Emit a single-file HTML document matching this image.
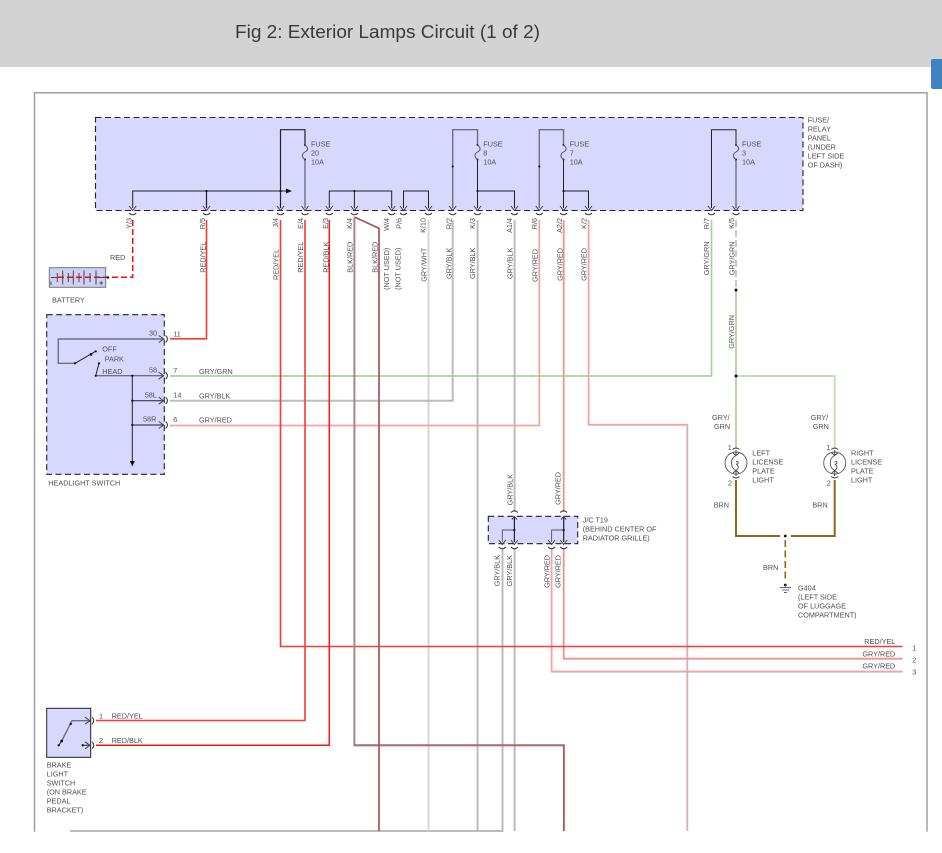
<!DOCTYPE html>
<html>
<head>
<meta charset="utf-8">
<title>Fig 2: Exterior Lamps Circuit (1 of 2)</title>
<style>
html,body{margin:0;padding:0;background:#fff;width:942px;height:853px;overflow:hidden}
svg{position:absolute;left:0;top:0;display:block}
text{font-family:"Liberation Sans",sans-serif;font-size:7.25px;fill:#4e4e58}
text.v{text-anchor:end}
.soft{filter:blur(.25px)}
.w{fill:none;stroke-linejoin:miter}
.ry{stroke:#fb3a2c;stroke-width:1.6}
.re{stroke:#f01818;stroke-width:1.5}
.br{stroke:#a85458;stroke-width:1.8}
.gw{stroke:#d6d6d6;stroke-width:2}
.gb{stroke:#bcbcbc;stroke-width:2}
.gr{stroke:#f4a2a2;stroke-width:1.8}
.gg{stroke:#a6d493;stroke-width:1.7}
.gl{stroke:#c6e0bc;stroke-width:2}
.bn{stroke:#8a6818;stroke-width:2}
.k{fill:none;stroke:#222;stroke-width:1}
.g{fill:none;stroke:#6e6e80;stroke-width:1.4}
.a{fill:none;stroke:#444;stroke-width:1}
.t{fill:none;stroke:#333;stroke-width:1}
</style>
</head>
<body>
<svg width="942" height="853" viewBox="0 0 942 853" xmlns="http://www.w3.org/2000/svg">
<defs>
<g id="dn"><path class="a" d="M-3.5,-4 L0,0.5 L3.5,-4"/><path class="t" d="M-3.5,3 Q0,6.5 3.5,3"/></g>
<g id="up"><path class="t" d="M-3.5,-4 Q0,-7.5 3.5,-4"/><path class="a" d="M-2.5,3 L0,0 L2.5,3"/></g>
<g id="rt"><path class="a" d="M-5,-3.5 L0,0 L-5,3.5"/><path class="t" d="M2,-3.5 Q5.5,0 2,3.5"/></g>
<g id="fs"><circle cx="0" cy="0" r="1" fill="#222"/><circle cx="0" cy="14.5" r="1" fill="#222"/><path fill="none" stroke="#555" stroke-width="1" d="M0,0 C3.5,3 3.5,5 0,7 C-3.5,9 -3.5,12 0,14.5"/></g>
<g id="lamp"><circle cx="0" cy="0" r="11" fill="none" stroke="#555" stroke-width=".9"/><path fill="none" stroke="#444" stroke-width=".9" d="M0,-13 V-8 M-3.5,-13.5 Q0,-16.5 3.5,-13.5 M-3,-10 L0,-7.5 L3,-10 M0,13 V8 M-3.5,13.5 Q0,16.5 3.5,13.5 M-3,10 L0,7.5 L3,10 M0,-7.5 C-6,-5 -6,5 0,7.5 M0,-1 C3,-3 3,2 0,1 M0,7.5 C3,5 3,3 0,1"/></g>
</defs>

<rect x="0" y="0" width="942" height="67" fill="#d3d3d3"/>
<path d="M942,59 H933 Q931,59 931,61 V87 Q931,89 933,89 H942 Z" fill="#3f83c3"/>
<text x="235" y="38" textLength="305" lengthAdjust="spacingAndGlyphs" style="font-size:18.5px;fill:#3a3a3a">Fig 2: Exterior Lamps Circuit (1 of 2)</text>

<g class="soft">
<path d="M34.5,831.7 V92.7 H927 V831.7" fill="none" stroke="#a0a0a0" stroke-width="1.5"/>

<rect x="95.5" y="117.5" width="707.5" height="93" fill="#d8d8ff" stroke="#222" stroke-width="1.1" stroke-dasharray="6 3.5"/>
<rect x="46.7" y="314.7" width="117.6" height="159.6" fill="#d8d8ff" stroke="#222" stroke-width="1.1" stroke-dasharray="6 3.5"/>
<rect x="49.3" y="267.7" width="56.4" height="19.6" fill="#d0d0f4" stroke="#777" stroke-width="1"/>
<rect x="46.7" y="708.3" width="44" height="49" fill="#d8d8ff" stroke="#222" stroke-width="1"/>
<rect x="488.3" y="516.3" width="89.4" height="27.4" fill="#d8d8ff" stroke="#222" stroke-width="1.1" stroke-dasharray="6 3.5"/>

<!-- field wires -->
<path class="w gb" d="M70,831 H502.5 V548"/>
<path class="w gw" d="M428.5,220 V831"/>
<path class="w gb" d="M452.7,220 V400.7 H170"/>
<path class="w gb" d="M477.6,220 V831"/>
<path class="w gb" d="M514.6,220 V512 M514.6,548 V831"/>
<path class="w gr" d="M539.3,220 V425.5 H170"/>
<path class="w gr" d="M588.6,220 V424.8 H687.3 V831"/>
<path class="w gb" style="stroke-width:.6" d="M687.3,425 V831"/>
<path class="w gr" d="M551.6,548 V671.5 H902.5"/>
<path class="w gb" style="stroke-width:.6" d="M551.6,672.3 H902.5"/>
<path class="w gr" style="stroke:#f58e8e" d="M563.7,220 V512 M563.7,548 V658.7 H902.5"/>
<path class="w gg" d="M711.5,220 V376 H170"/>
<path class="w gl" d="M736,376 H834.7 V449"/>
<path class="w gg" d="M736,290 V449"/>
<path d="M736,220 V288" fill="none" stroke="#bbb" stroke-width="1.6" stroke-dasharray="7 3"/>
<path class="w ry" d="M206.5,220 V338.8 H170"/>
<path class="w ry" d="M280.5,220 V646.5 H902.5"/>
<path class="w ry" d="M305,220 V720.5 H96"/>
<path class="w re" d="M329.3,220 V745.3 H96"/>
<path class="w" stroke="#a08a8a" stroke-width="2" d="M354.4,218 V745.3 H563.9 V831"/>
<path class="w" stroke="#e86a6a" stroke-width="1" d="M355,745.8 H564.5 V831"/>
<path class="w" stroke="#666" stroke-width=".8" d="M354.2,745 H563.4 V831"/>
<path class="w br" style="stroke-width:1.7" d="M354.4,217 L379,228.3 V831"/>
<path fill="none" stroke="#f01010" stroke-width="1.5" stroke-dasharray="6 3" d="M132.7,220 V277.3 H56"/>
<path class="w bn" d="M736,480 V536 H780 M791,536 H834.7 V480"/>
<path fill="none" stroke="#8a6818" stroke-width="1.6" stroke-dasharray="7 3.5" d="M785.3,540 V580"/>

<!-- panel internals -->
<path class="k" d="M132.7,208 V191 H287"/>
<path fill="#111" d="M286,188.5 L292,191 L286,193.5 Z"/>
<path class="k" style="stroke-width:1.2" d="M206.5,191 V208 M280.5,208 V129.7 H305 V145"/>
<path class="g" d="M305,159.5 V208"/>
<path class="k" d="M329.3,208 V191 H391.7 V208 M354.4,191 V208 M403.5,208 V191 H428.5 V208"/>
<path class="g" d="M452.7,208 V129.7 H477.5 V145"/>
<path class="k" d="M477.5,159.5 V208 M477.5,191 H514.5 V208"/>
<path class="g" d="M539.3,208 V129.7 H563.5 V145"/>
<path class="k" d="M563.5,159.5 V208 M563.5,191 H588.5 V208"/>
<path class="k" d="M711.5,208 V129.7 H736 V145"/>
<path class="g" d="M736,159.5 V208"/>
<use href="#fs" x="305" y="145"/><use href="#fs" x="477.5" y="145"/><use href="#fs" x="563.5" y="145"/><use href="#fs" x="736" y="145"/>
<g fill="#111">
<circle cx="206.5" cy="191" r="1.1"/><circle cx="280.5" cy="191" r="1.1"/><circle cx="354.4" cy="191" r="1.1"/>
<circle cx="452.7" cy="166.5" r="1.1"/><circle cx="477.5" cy="191" r="1.1"/><circle cx="539.3" cy="166.5" r="1.1"/><circle cx="563.5" cy="191" r="1.1"/>
<circle cx="736" cy="290" r="1.5"/><circle cx="736" cy="376" r="1.5"/><circle cx="785.3" cy="536" r="1.4"/><circle cx="785.3" cy="585" r="1.4"/>
</g>
<use href="#dn" x="132.7" y="210"/><use href="#dn" x="206.5" y="210"/><use href="#dn" x="280.5" y="210"/><use href="#dn" x="305" y="210"/><use href="#dn" x="329.3" y="210"/><use href="#dn" x="354.4" y="210"/><use href="#dn" x="391.7" y="210"/><use href="#dn" x="403.5" y="210"/><use href="#dn" x="428.5" y="210"/><use href="#dn" x="452.7" y="210"/><use href="#dn" x="477.5" y="210"/><use href="#dn" x="514.5" y="210"/><use href="#dn" x="539.3" y="210"/><use href="#dn" x="563.5" y="210"/><use href="#dn" x="588.5" y="210"/><use href="#dn" x="711.5" y="210"/><use href="#dn" x="736" y="210"/>

<!-- battery -->
<path fill="none" stroke="#444" stroke-width="1" d="M51,277.5 H57.3 M57.3,273 V282 M62.7,270.5 V284.5 M68.3,273 V282 M73.3,270.5 V284.5 M79,273 V282 M84,270.5 V284.5 M90,273 V282 M96,270.5 V284.5 M96,277.5 H108 M51,281.5 V285 M99.5,283 H103 M101.2,281.3 V284.7"/>
<circle cx="108" cy="277.5" r="1.2" fill="#111"/>

<!-- headlight switch -->
<path class="g" d="M163,339 H58.3 V363.3 H75"/>
<path class="k" d="M75,363.3 L95.7,351.3 M99,363.3 L95.7,375.7"/>
<path class="g" d="M95.7,375.7 H163"/>
<path class="k" d="M132.3,375.7 V462 M132.3,400.7 H163 M132.3,425 H163"/>
<path fill="#111" d="M129.8,461 H134.8 L132.3,466.5 Z"/>
<g fill="#111"><circle cx="75" cy="363.3" r="1.2"/><circle cx="91" cy="354.3" r="1.4"/><circle cx="95.7" cy="351.3" r="1.1"/><circle cx="99" cy="363.3" r="1.1"/><circle cx="95.7" cy="375.7" r="1.1"/><circle cx="132.3" cy="375.7" r="1.1"/><circle cx="132.3" cy="400.7" r="1.1"/><circle cx="132.3" cy="425" r="1.1"/></g>
<use href="#rt" x="163.7" y="339"/><use href="#rt" x="163.7" y="375.7"/><use href="#rt" x="163.7" y="400.7"/><use href="#rt" x="163.7" y="425"/>

<!-- J/C -->
<path class="k" style="stroke-width:1.2" d="M514.4,517 V542 M563.7,517 V542"/>
<path fill="none" stroke="#555" stroke-width=".9" d="M502.3,542 V530 H514.4 M551.6,542 V530 H563.7"/>
<g fill="#111"><circle cx="514.4" cy="530" r="1.1"/><circle cx="563.7" cy="530" r="1.1"/></g>
<use href="#up" x="514.4" y="516.5"/><use href="#up" x="563.7" y="516.5"/>
<use href="#dn" x="502.3" y="544"/><use href="#dn" x="514.4" y="544"/><use href="#dn" x="551.6" y="544"/><use href="#dn" x="563.7" y="544"/>

<!-- lamps / ground -->
<use href="#lamp" x="736" y="463"/><use href="#lamp" x="834.7" y="463"/>
<path fill="none" stroke="#666" stroke-width=".9" d="M780,587.5 H791 M782,590 H789 M784,592.5 H787 M785.3,585 V587.5"/>

<!-- brake -->
<path class="g" d="M90,720.7 H72 L61.7,741"/>
<path class="k" d="M61.7,741 L58.7,745.3 M82.7,745.3 H90"/>
<g fill="#111"><circle cx="70.7" cy="724" r="1.2"/><circle cx="61.7" cy="741" r="1.4"/><circle cx="58.7" cy="745.3" r="1.2"/><circle cx="82.7" cy="745.3" r="1.2"/></g>
<use href="#rt" x="90" y="720.7"/><use href="#rt" x="90" y="745.3"/>

<!-- fuse labels -->
<text x="311" y="146.7">FUSE</text><text x="311" y="155.7">20</text><text x="311" y="164.7">10A</text>
<text x="483.3" y="146.7">FUSE</text><text x="483.3" y="155.7">8</text><text x="483.3" y="164.7">10A</text>
<text x="569.7" y="146.7">FUSE</text><text x="569.7" y="155.7">7</text><text x="569.7" y="164.7">10A</text>
<text x="742" y="146.7">FUSE</text><text x="742" y="155.7">3</text><text x="742" y="164.7">10A</text>
<text x="807.7" y="122.7">FUSE/</text><text x="807.7" y="131.7">RELAY</text><text x="807.7" y="140.7">PANEL</text><text x="807.7" y="149.7">(UNDER</text><text x="807.7" y="158.7">LEFT SIDE</text><text x="807.7" y="167.7">OF DASH)</text>

<!-- rotated connector labels -->
<text class="v" transform="translate(131.5,218) rotate(-90)">Y/3</text>
<text class="v" transform="translate(205,218) rotate(-90)">R/5</text>
<text class="v" transform="translate(278,218) rotate(-90)">J/4</text>
<text class="v" transform="translate(303,218) rotate(-90)">E/4</text>
<text class="v" transform="translate(328,218) rotate(-90)">E/3</text>
<text class="v" transform="translate(352,218) rotate(-90)">K/4</text>
<text class="v" transform="translate(389,218) rotate(-90)">W/4</text>
<text class="v" transform="translate(401.7,218) rotate(-90)">P/6</text>
<text class="v" transform="translate(425.7,218) rotate(-90)">K/10</text>
<text class="v" transform="translate(451.7,218) rotate(-90)">R/2</text>
<text class="v" transform="translate(475,218) rotate(-90)">K/3</text>
<text class="v" transform="translate(512,218) rotate(-90)">A1/4</text>
<text class="v" transform="translate(537,218) rotate(-90)">R/6</text>
<text class="v" transform="translate(562,218) rotate(-90)">A2/2</text>
<text class="v" transform="translate(586.7,218) rotate(-90)">K/2</text>
<text class="v" transform="translate(709,218) rotate(-90)">R/7</text>
<text class="v" transform="translate(734,218) rotate(-90)">K/5</text>

<!-- rotated wire labels -->
<text class="v" transform="translate(205.7,241.7) rotate(-90)">RED/YEL</text>
<text class="v" transform="translate(278.7,249) rotate(-90)">RED/YEL</text>
<text class="v" transform="translate(303,241.7) rotate(-90)">RED/YEL</text>
<text class="v" transform="translate(328.7,241.7) rotate(-90)">RED/BLK</text>
<text class="v" transform="translate(352.7,241.7) rotate(-90)">BLK/RED</text>
<text class="v" transform="translate(377.3,241.7) rotate(-90)">BLK/RED</text>
<text class="v" transform="translate(389,247.7) rotate(-90)">(NOT USED)</text>
<text class="v" transform="translate(400.7,247.7) rotate(-90)">(NOT USED)</text>
<text class="v" transform="translate(426.7,247.7) rotate(-90)">GRY/WHT</text>
<text class="v" transform="translate(451.7,247.7) rotate(-90)">GRY/BLK</text>
<text class="v" transform="translate(475,247.7) rotate(-90)">GRY/BLK</text>
<text class="v" transform="translate(512.3,247.7) rotate(-90)">GRY/BLK</text>
<text class="v" transform="translate(537.3,249) rotate(-90)">GRY/RED</text>
<text class="v" transform="translate(562.3,248) rotate(-90)">GRY/RED</text>
<text class="v" transform="translate(586.3,248) rotate(-90)">GRY/RED</text>
<text class="v" transform="translate(709,241.5) rotate(-90)">GRY/GRN</text>
<text class="v" transform="translate(734.7,241.5) rotate(-90)">GRY/GRN</text>
<text class="v" transform="translate(734,315) rotate(-90)">GRY/GRN</text>
<text class="v" transform="translate(512.3,474) rotate(-90)">GRY/BLK</text>
<text class="v" transform="translate(560.7,472) rotate(-90)">GRY/RED</text>
<text class="v" transform="translate(499.3,555) rotate(-90)">GRY/BLK</text>
<text class="v" transform="translate(512,555) rotate(-90)">GRY/BLK</text>
<text class="v" transform="translate(549.3,555) rotate(-90)">GRY/RED</text>
<text class="v" transform="translate(560.7,555) rotate(-90)">GRY/RED</text>

<!-- left labels -->
<text x="110" y="260">RED</text>
<text x="52" y="302.7">BATTERY</text>
<text x="48.3" y="485.7">HEADLIGHT SWITCH</text>
<text x="149" y="335.7">30</text><text x="173.3" y="336.7">11</text>
<text x="102.3" y="351.7">OFF</text><text x="104.7" y="361.7">PARK</text><text x="102.3" y="374">HEAD</text>
<text x="149" y="372.3">58</text><text x="173.3" y="373">7</text><text x="199" y="374">GRY/GRN</text>
<text x="144.7" y="397.7">58L</text><text x="173.3" y="397.7">14</text><text x="199" y="398.5">GRY/BLK</text>
<text x="143" y="421.7">58R</text><text x="173.3" y="422">6</text><text x="199" y="422.7">GRY/RED</text>

<!-- lamp labels -->
<text x="712" y="420">GRY/</text><text x="714" y="429">GRN</text>
<text x="810.7" y="420">GRY/</text><text x="812.7" y="429">GRN</text>
<text x="727.7" y="450">1</text><text x="728" y="485.3">2</text>
<text x="826.4" y="450">1</text><text x="826.7" y="485.3">2</text>
<text x="713.7" y="507.7">BRN</text><text x="812.4" y="507.7">BRN</text>
<text x="752.3" y="455.7">LEFT</text><text x="752.3" y="464.7">LICENSE</text><text x="752.3" y="473.7">PLATE</text><text x="752.3" y="482.7">LIGHT</text>
<text x="851" y="455.7">RIGHT</text><text x="851" y="464.7">LICENSE</text><text x="851" y="473.7">PLATE</text><text x="851" y="482.7">LIGHT</text>
<text x="763" y="570">BRN</text>
<text x="798" y="590.7">G404</text><text x="798" y="599.7">(LEFT SIDE</text><text x="798" y="608.7">OF LUGGAGE</text><text x="798" y="617.7">COMPARTMENT)</text>

<!-- J/C text -->
<text x="582.7" y="522.7">J/C T19</text><text x="582.7" y="531.7">(BEHIND CENTER OF</text><text x="582.7" y="540.7">RADIATOR GRILLE)</text>

<!-- right terminals -->
<text x="895.3" y="644" text-anchor="end">RED/YEL</text><text x="895.3" y="656.7" text-anchor="end">GRY/RED</text><text x="895.3" y="668.7" text-anchor="end">GRY/RED</text>
<text x="912.3" y="650.5">1</text><text x="912.3" y="662.5">2</text><text x="912.3" y="674.5">3</text>

<!-- brake labels -->
<text x="99" y="718.3">1</text><text x="111.7" y="718.3">RED/YEL</text>
<text x="99" y="743">2</text><text x="111.7" y="743">RED/BLK</text>
<text x="46.7" y="767.7">BRAKE</text><text x="46.7" y="776.7">LIGHT</text><text x="46.7" y="785.7">SWITCH</text><text x="46.7" y="794.7">(ON BRAKE</text><text x="46.7" y="803.7">PEDAL</text><text x="46.7" y="812.7">BRACKET)</text>
</g>
</svg>
</body>
</html>
